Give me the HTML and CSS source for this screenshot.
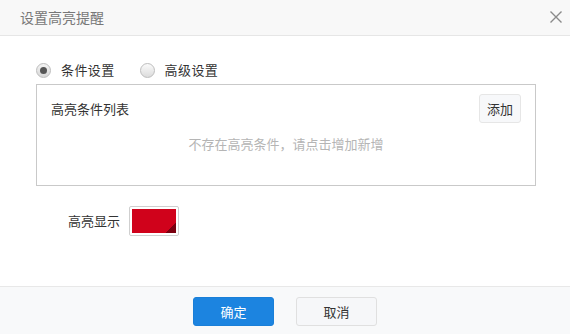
FILE: index.html
```html
<!DOCTYPE html>
<html lang="zh-CN">
<head>
<meta charset="utf-8">
<title>设置高亮提醒</title>
<link rel="stylesheet" href="styles.css">
</head>
<body>
<div class="dialog">
  <div class="header">
    <span class="title">设置高亮提醒</span>
    <svg class="close" width="14" height="14" viewBox="0 0 14 14"><path d="M1.5 1.5 L12.5 12.5 M12.5 1.5 L1.5 12.5" stroke="#8a8a8a" stroke-width="1.4" fill="none"/></svg>
  </div>
  <div class="content">
    <div class="radios">
      <label class="radio"><span class="dot checked"></span><span>条件设置</span></label>
      <label class="radio"><span class="dot"></span><span>高级设置</span></label>
    </div>
    <div class="box">
      <div class="box-head">
        <span class="box-title">高亮条件列表</span>
        <button class="btn-add">添加</button>
      </div>
      <div class="empty">不存在高亮条件，请点击增加新增</div>
    </div>
    <div class="color-row">
      <span class="color-label">高亮显示</span>
      <span class="swatch"><span class="swatch-fill"></span></span>
    </div>
  </div>
  <div class="footer">
    <button class="btn btn-primary">确定</button>
    <button class="btn btn-default">取消</button>
  </div>
</div>
</body>
</html>
```
FILE: styles.css
```css
* { box-sizing: border-box; }
html, body { margin: 0; padding: 0; }
body {
  font-family: "Noto Sans CJK SC", "Liberation Sans", sans-serif;
  font-size: 13px;
  color: #333;
  background: #fff;
}
.dialog { width: 570px; height: 334px; display: flex; flex-direction: column; }
.header {
  height: 36px;
  flex: none;
  background: #f8f8f8;
  border-bottom: 1px solid #e6e6e6;
  display: flex;
  align-items: center;
  justify-content: space-between;
  padding: 0 7px 0 20px;
}
.title { font-size: 14px; color: #777; line-height: 20px; margin-top: -2px; }
.close { display: block; margin-top: -1px; }
.content { flex: 1; padding: 24px 34px 0 36px; }
.radios { display: flex; align-items: center; height: 20px; }
.radio { display: flex; align-items: center; line-height: 20px; margin-right: 25px; }
.radio span:last-child { letter-spacing: 0.4px; }
.dot {
  width: 15px; height: 15px; border-radius: 50%;
  border: 1px solid #bdbdbd;
  background: linear-gradient(#fafafa, #dcdcdc);
  margin-right: 10px;
  display: flex; align-items: center; justify-content: center;
}
.dot.checked { background: linear-gradient(#f4f4f4, #d6d6d6); }
.dot.checked::after {
  content: ""; width: 7px; height: 7px; border-radius: 50%; background: #555;
}
.box {
  margin-top: 4px;
  width: 500px; height: 102px;
  border: 1px solid #c9c9c9;
  padding: 9px 14px 0 14px;
}
.box-head { display: flex; align-items: center; justify-content: space-between; height: 29px; }
.box-title { line-height: 20px; }
.btn-add {
  font-family: inherit; font-size: 13px; color: #333;
  width: 42px; height: 29px; padding: 0;
  background: #f7f8fa; border: 1px solid #e6e6e6; border-radius: 3px;
}
.empty { text-align: center; color: #b5b5b5; margin-top: 11px; line-height: 20px; }
.color-row { display: flex; align-items: center; margin-top: 20px; height: 30px; }
.color-label { width: 84px; text-align: right; line-height: 20px; margin-right: 9px; }
.swatch {
  width: 50px; height: 30px; border: 1px solid #cfcfcf; border-radius: 2px;
  padding: 2px; display: block;
}
.swatch-fill {
  display: block; width: 100%; height: 100%;
  background: linear-gradient(135deg, #d0021b 0, #d0021b 84%, #7a0010 84%, #7a0010 100%);
}
.footer {
  height: 48px; flex: none;
  border-top: 1px solid #e8e8e8;
  background: #f8f9fa;
  display: flex; justify-content: center; align-items: flex-start;
  padding-top: 10px; gap: 22px;
}
.btn {
  font-family: inherit; font-size: 13px;
  width: 81px; height: 29px; padding: 0; border-radius: 3px;
}
.btn-primary { background: #1c84e0; color: #fff; border: 1px solid #1a7fd8; }
.btn-default { background: #f6f7f9; color: #333; border: 1px solid #e0e0e0; }
```
